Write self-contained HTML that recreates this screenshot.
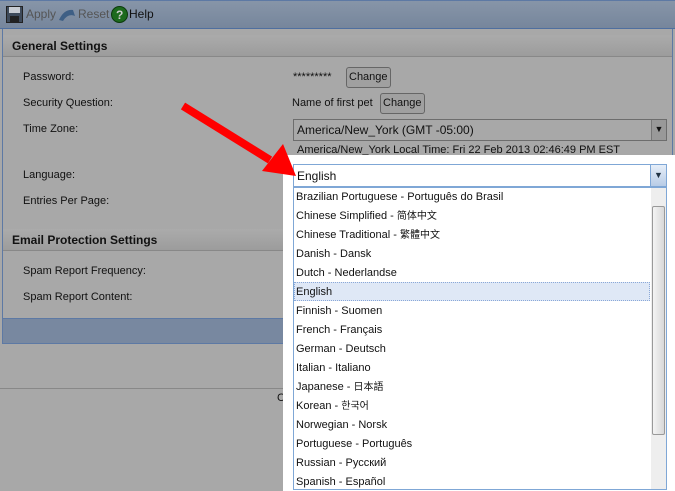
<!DOCTYPE html>
<html><head><meta charset="utf-8"><style>
*{margin:0;padding:0;box-sizing:border-box}
body{width:675px;height:491px;overflow:hidden;background:#a8a8a8;font-family:"Liberation Sans","Noto Sans CJK SC",sans-serif;font-size:11px;color:#111;position:relative}
.a{position:absolute;white-space:nowrap;line-height:13px}
.tb{position:absolute;left:0;top:0;width:675px;height:29px;background:linear-gradient(#8795a8,#76869c);border-bottom:1px solid #4f6f9f;border-top:1px solid #5d79a4}
.panel{position:absolute;left:2px;top:29px;width:671px;height:315px;border:1px solid #5d79a4;border-top:none}
.hdr{position:absolute;left:3px;width:669px;height:22px;background:linear-gradient(#ababab,#9c9c9c);border-bottom:1px solid #888;font-weight:bold;font-size:12px;padding:4px 9px;line-height:14px}
.btn{position:absolute;height:21px;border:1px solid #666;border-radius:3px;background:#a0a0a0;font-size:11px;padding:3px 2px;line-height:13px}
.sel{position:absolute;border:1px solid #6d6d6d;background:#a8a8a8}
.li{position:absolute;left:296px;font-size:11px;color:#111;line-height:13px;height:13px;white-space:nowrap;overflow:visible}
.li span{font-size:10px}
</style></head><body>
<div class="tb"></div>
<svg class="a" style="left:6px;top:6px" width="17" height="17"><rect x="0.5" y="0.5" width="16" height="16" fill="#3e4a5a" stroke="#222"/><rect x="3" y="1" width="11" height="6" fill="#c8ccd2"/><rect x="4" y="10" width="9" height="6" fill="#222"/></svg>
<div class="a" style="left:26px;top:8px;color:#555;font-size:12px">Apply</div>
<svg class="a" style="left:58px;top:7px" width="18" height="16"><path d="M1 13 Q6 2 15 3 L17 9 Q10 6 5 14Z" fill="#3e5f85"/></svg>
<div class="a" style="left:78px;top:8px;color:#555;font-size:12px">Reset</div>
<svg class="a" style="left:111px;top:6px" width="17" height="17"><circle cx="8.5" cy="8.5" r="8" fill="#1d6a1d" stroke="#0c3a0c"/><text x="5" y="13" font-size="12" font-weight="bold" fill="#ccc" font-family="Liberation Sans">?</text></svg>
<div class="a" style="left:129px;top:8px;font-size:12px">Help</div>
<div class="panel"></div>
<div class="hdr" style="top:35px">General Settings</div>
<div class="a" style="left:23px;top:71px">Password:</div>
<div class="a" style="left:23px;top:97px">Security Question:</div>
<div class="a" style="left:23px;top:123px">Time Zone:</div>
<div class="a" style="left:23px;top:169px">Language:</div>
<div class="a" style="left:23px;top:195px">Entries Per Page:</div>
<div class="hdr" style="top:229px">Email Protection Settings</div>
<div class="a" style="left:23px;top:265px">Spam Report Frequency:</div>
<div class="a" style="left:23px;top:291px">Spam Report Content:</div>
<div class="a" style="left:2px;top:318px;width:671px;height:26px;background:#7888a0;border:1px solid #5d79a4"></div>
<div class="a" style="left:0;top:388px;width:675px;height:1px;background:#888"></div>
<div class="a" style="left:277px;top:392px">Co</div>
<div class="a" style="left:293px;top:71px">*********</div>
<div class="btn" style="left:346px;top:67px">Change</div>
<div class="a" style="left:292px;top:97px">Name of first pet</div>
<div class="btn" style="left:380px;top:93px">Change</div>
<div class="sel" style="left:293px;top:119px;width:374px;height:22px;font-size:12px;padding:3px 3px;line-height:14px">America/New_York (GMT -05:00)</div>
<div class="a" style="left:651px;top:120px;width:15px;height:20px;background:#999;border-left:1px solid #777;font-size:9px;text-align:center;line-height:18px">&#9660;</div>
<div class="a" style="left:297px;top:144px">America/New_York Local Time: Fri 22 Feb 2013 02:46:49 PM EST</div>
<div class="a" style="left:283px;top:155px;width:392px;height:336px;background:#fff"></div>
<div class="a" style="left:293px;top:164px;width:374px;height:23px;border:1px solid #7fa7d6;font-size:12px;padding:4px 3px;background:#fff;line-height:14px">English</div>
<div class="a" style="left:650px;top:165px;width:16px;height:21px;background:linear-gradient(#e6eef8,#b8cce6);border-left:1px solid #7fa7d6;font-size:9px;text-align:center;line-height:20px;color:#234">&#9660;</div>
<div class="a" style="left:293px;top:187px;width:374px;height:303px;border:1px solid #7fa7d6"></div>
<div class="a" style="left:651px;top:188px;width:15px;height:301px;background:#eee"></div>
<div class="a" style="left:652px;top:206px;width:13px;height:229px;background:linear-gradient(90deg,#f4f4f4,#d8d8d8);border:1px solid #999;border-radius:2px"></div>
<div class="a" style="left:294px;top:282px;width:356px;height:19px;background:#dfe8f6;border:1px dotted #8aa8d8"></div>
<div class="li" style="top:191px">Brazilian Portuguese - Português do Brasil</div>
<div class="li" style="top:210px">Chinese Simplified - <span>简体中文</span></div>
<div class="li" style="top:229px">Chinese Traditional - <span>繁體中文</span></div>
<div class="li" style="top:248px">Danish - Dansk</div>
<div class="li" style="top:267px">Dutch - Nederlandse</div>
<div class="li" style="top:286px">English</div>
<div class="li" style="top:305px">Finnish - Suomen</div>
<div class="li" style="top:324px">French - Français</div>
<div class="li" style="top:343px">German - Deutsch</div>
<div class="li" style="top:362px">Italian - Italiano</div>
<div class="li" style="top:381px">Japanese - <span>日本語</span></div>
<div class="li" style="top:400px">Korean - <span>한국어</span></div>
<div class="li" style="top:419px">Norwegian - Norsk</div>
<div class="li" style="top:438px">Portuguese - Português</div>
<div class="li" style="top:457px">Russian - Русский</div>
<div class="li" style="top:476px">Spanish - Español</div>
<svg class="a" style="left:0;top:0" width="675" height="491"><line x1="183" y1="106" x2="270" y2="160" stroke="#ff0000" stroke-width="8"/><polygon points="296,176 262,171 283,144" fill="#ff0000"/></svg>
</body></html>
